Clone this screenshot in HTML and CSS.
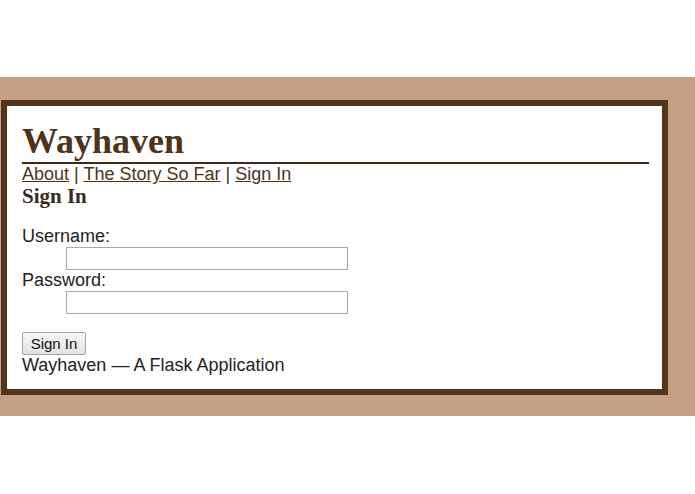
FILE: index.html
```html
<!DOCTYPE html>
<html>
<head>
<meta charset="utf-8">
<title>Wayhaven</title>
<link rel="stylesheet" href="styles.css">
</head>
<body>
<div class="band">
  <div class="card">
    <h1 class="title">Wayhaven</h1>
    <nav class="nav"><a href="#">About</a> | <a href="#">The Story So Far</a> | <a href="#">Sign In</a></nav>
    <h2 class="heading">Sign In</h2>
    <form class="form">
      <div class="label">Username:</div>
      <div class="field"><input class="input" type="text"></div>
      <div class="label">Password:</div>
      <div class="field"><input class="input" type="password"></div>
      <div class="actions"><button class="button" type="button">Sign In</button></div>
    </form>
    <div class="footer">Wayhaven — A Flask Application</div>
  </div>
</div>
</body>
</html>
```

FILE: styles.css
```css
html, body {
  margin: 0;
  padding: 0;
  background: #ffffff;
}
body {
  padding-top: 77px;
  font-family: "Liberation Sans", Arial, sans-serif;
  font-size: 18px;
  color: #222222;
}
.band {
  background: #c3a184;
  padding: 23px 27px 21px 1px;
}
.card {
  background: #ffffff;
  border: 6px solid #543519;
  padding: 15px 13px 14px 15px;
}
.title {
  margin: 0;
  font-family: "Liberation Serif", "Times New Roman", serif;
  font-size: 36px;
  font-weight: bold;
  line-height: 41.4px;
  color: #4e3219;
  border-bottom: 2px solid #3d2a18;
}
.nav {
  line-height: 20.7px;
  color: #333333;
}
.nav a {
  color: #4e3219;
  text-decoration: underline;
}
.heading {
  margin: 0;
  font-family: "Liberation Serif", "Times New Roman", serif;
  font-size: 21px;
  font-weight: bold;
  line-height: 23px;
  color: #3a2a1c;
}
.form {
  margin: 18px 0 0 0;
}
.label {
  line-height: 20.7px;
}
.field {
  margin-left: 44px;
  height: 23px;
}
.input {
  box-sizing: border-box;
  width: 282px;
  height: 23px;
  margin: 0;
  padding: 1px 3px;
  border: 1px solid #a9a9a9;
  background: #ffffff;
  display: block;
}
.actions {
  margin-top: 18px;
}
.button {
  box-sizing: border-box;
  display: block;
  height: 23px;
  width: 64px;
  margin: 0;
  padding: 0 6px;
  font-family: "Liberation Sans", Arial, sans-serif;
  font-size: 15px;
  color: #111111;
  background: linear-gradient(#f6f6f6, #e2e2e2);
  border: 1px solid #a3a3a3;
  border-radius: 2px;
}
.footer {
  line-height: 20.7px;
  color: #222222;
}
```
